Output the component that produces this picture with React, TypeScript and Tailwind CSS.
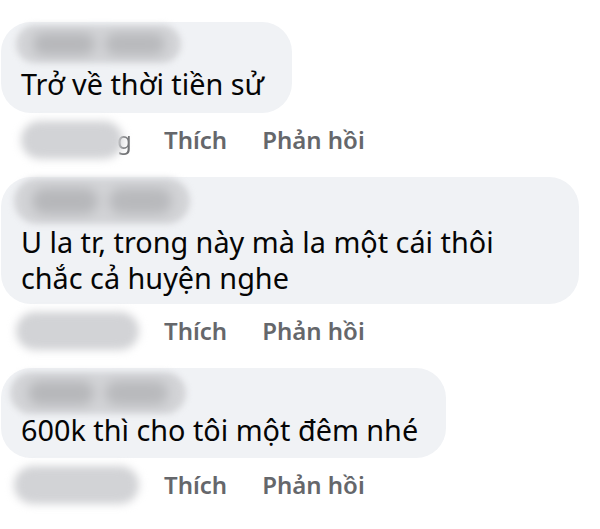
import React from 'react';

interface Comment {
  id: number;
  lines: string[];
  bubbleClass: string;
  headClass: string;
  nameClass: string;
  dateClass: string;
  dateTail?: string;
}

const comments: Comment[] = [
  {
    id: 1,
    lines: ['Trở về thời tiền sử'],
    bubbleClass: 'mt-[22px] pr-[28px] pb-[11px]',
    headClass: 'h-[44px] pl-[15px] pt-[3px]',
    nameClass: 'w-[165px] h-[38px]',
    dateClass: 'ml-[20px] w-[102px]',
    dateTail: 'g',
  },
  {
    id: 2,
    lines: ['U la tr, trong này mà la một cái thôi', 'chắc cả huyện nghe'],
    bubbleClass: 'mt-[17px] pr-[85px] pb-[8px]',
    headClass: 'h-[47px] pl-[13px] pt-[1px]',
    nameClass: 'w-[176px] h-[46px]',
    dateClass: 'ml-[15px] w-[123px]',
  },
  {
    id: 3,
    lines: ['600k thì cho tôi một đêm nhé'],
    bubbleClass: 'mt-[17px] pr-[28px] pb-[10px]',
    headClass: 'h-[44px] pl-[9px] pt-[4px]',
    nameClass: 'w-[176px] h-[42px]',
    dateClass: 'ml-[13px] w-[125px]',
  },
];

const BlurredName: React.FC<{ className: string }> = ({ className }) => (
  <div className={`relative rounded-full bg-[#d3d4d7] blur-[3px] ${className}`}>
    <div className="absolute left-[10%] top-[22%] h-[56%] w-[38%] rounded-full bg-[#b6b7ba] blur-[5px]" />
    <div className="absolute right-[10%] top-[22%] h-[56%] w-[36%] rounded-full bg-[#b8b9bc] blur-[5px]" />
  </div>
);

const App: React.FC = () => {
  return (
    <div
      className="min-h-screen w-[600px] bg-white pl-[1px]"
      style={{ fontFamily: '"Noto Sans", "Open Sans", sans-serif' }}
    >
      {comments.map((c) => (
        <div key={c.id} className="flex flex-col items-start">
          {/* Bubble */}
          <div className={`rounded-[30px] bg-[#f0f2f5] ${c.bubbleClass}`}>
            <div className={c.headClass}>
              <BlurredName className={c.nameClass} />
            </div>
            <div className="pl-[20px] text-[28.8px] leading-[36px] text-[#050505]">
              {c.lines.map((line, i) => (
                <div key={i}>{line}</div>
              ))}
            </div>
          </div>

          {/* Actions */}
          <div className="mt-[7px] flex h-[40px] items-center text-[24px] font-semibold leading-[40px] text-[#65676b]">
            <div className="relative flex h-[40px] w-[145px] items-center">
              {c.dateTail && (
                <span className="absolute left-[116px] font-normal text-[#6f7073] blur-[0.6px]">{c.dateTail}</span>
              )}
              <div className={`h-[38px] rounded-full bg-[#d2d3d6] blur-[4px] ${c.dateClass}`} />
            </div>
            <span className="ml-[18px]">Thích</span>
            <span className="ml-[35px]">Phản hồi</span>
          </div>
        </div>
      ))}
    </div>
  );
};

export default App;
